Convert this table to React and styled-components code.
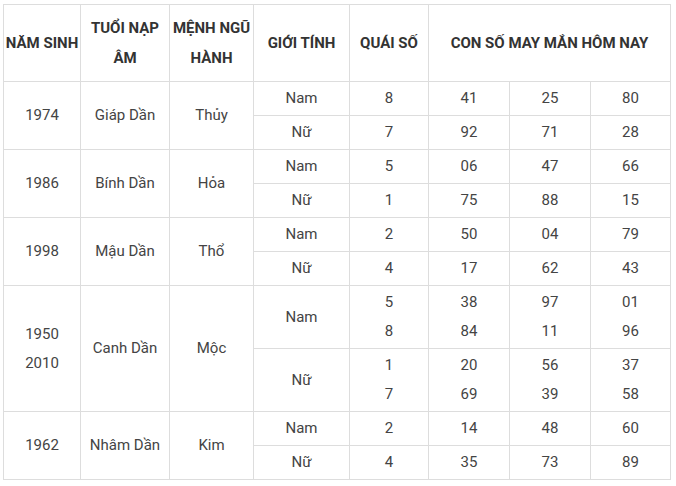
import React from "react";
import styled, { createGlobalStyle } from "styled-components";

const Global = createGlobalStyle`
  html, body { margin: 0; padding: 0; background: #fff; }
  body { font-family: Roboto, "Liberation Sans", Arial, sans-serif; }
`;

const Page = styled.div`
  padding: 4px 0 0 3px;
`;

const Table = styled.table`
  border-collapse: collapse;
  table-layout: fixed;
  width: 667px;
  font-family: Roboto, "Liberation Sans", Arial, sans-serif;
  font-size: 15px;
  color: #444;
`;

const HeadCell = styled.th`
  border: 1px solid #ddd;
  padding: 0;
  font-weight: 700;
  color: #333;
  text-transform: uppercase;
  line-height: 30px;
  height: 76px;
  text-align: center;
  vertical-align: middle;
`;

const Row = styled.tr`
  height: ${(p) => p.$h}px;
`;

const Cell = styled.td`
  border: 1px solid #ddd;
  padding: 0;
  line-height: 29px;
  text-align: center;
  vertical-align: middle;
`;

const Line = styled.div`
  line-height: 29px;
`;

const widths = [77, 89, 84, 96, 79, 81, 81, 80];

const data = [
  {
    years: ["1974"], tuoi: "Giáp Dần", menh: "Thủy",
    rows: [
      { g: "Nam", q: ["8"], n: [["41"], ["25"], ["80"]] },
      { g: "Nữ", q: ["7"], n: [["92"], ["71"], ["28"]] },
    ],
  },
  {
    years: ["1986"], tuoi: "Bính Dần", menh: "Hỏa",
    rows: [
      { g: "Nam", q: ["5"], n: [["06"], ["47"], ["66"]] },
      { g: "Nữ", q: ["1"], n: [["75"], ["88"], ["15"]] },
    ],
  },
  {
    years: ["1998"], tuoi: "Mậu Dần", menh: "Thổ",
    rows: [
      { g: "Nam", q: ["2"], n: [["50"], ["04"], ["79"]] },
      { g: "Nữ", q: ["4"], n: [["17"], ["62"], ["43"]] },
    ],
  },
  {
    years: ["1950", "2010"], tuoi: "Canh Dần", menh: "Mộc",
    rows: [
      { g: "Nam", q: ["5", "8"], n: [["38", "84"], ["97", "11"], ["01", "96"]] },
      { g: "Nữ", q: ["1", "7"], n: [["20", "69"], ["56", "39"], ["37", "58"]] },
    ],
  },
  {
    years: ["1962"], tuoi: "Nhâm Dần", menh: "Kim",
    rows: [
      { g: "Nam", q: ["2"], n: [["14"], ["48"], ["60"]] },
      { g: "Nữ", q: ["4"], n: [["35"], ["73"], ["89"]] },
    ],
  },
];

const Lines = ({ items }) =>
  items.length === 1 ? items[0] : items.map((t, i) => <Line key={i}>{t}</Line>);

export default function App() {
  return (
    <Page>
      <Global />
      <Table>
        <colgroup>
          {widths.map((w, i) => (
            <col key={i} style={{ width: w }} />
          ))}
        </colgroup>
        <thead>
          <tr>
            <HeadCell>Năm sinh</HeadCell>
            <HeadCell>Tuổi nạp âm</HeadCell>
            <HeadCell>Mệnh ngũ hành</HeadCell>
            <HeadCell>Giới tính</HeadCell>
            <HeadCell>Quái số</HeadCell>
            <HeadCell colSpan={3}>Con số may mắn hôm nay</HeadCell>
          </tr>
        </thead>
        <tbody>
          {data.map((d, di) =>
            d.rows.map((r, ri) => (
              <Row key={`${di}-${ri}`} $h={r.q.length > 1 ? 63 : 34}>
                {ri === 0 && (
                  <>
                    <Cell rowSpan={2}>
                      <Lines items={d.years} />
                    </Cell>
                    <Cell rowSpan={2}>{d.tuoi}</Cell>
                    <Cell rowSpan={2}>{d.menh}</Cell>
                  </>
                )}
                <Cell>{r.g}</Cell>
                <Cell>
                  <Lines items={r.q} />
                </Cell>
                {r.n.map((col, ci) => (
                  <Cell key={ci}>
                    <Lines items={col} />
                  </Cell>
                ))}
              </Row>
            ))
          )}
        </tbody>
      </Table>
    </Page>
  );
}
